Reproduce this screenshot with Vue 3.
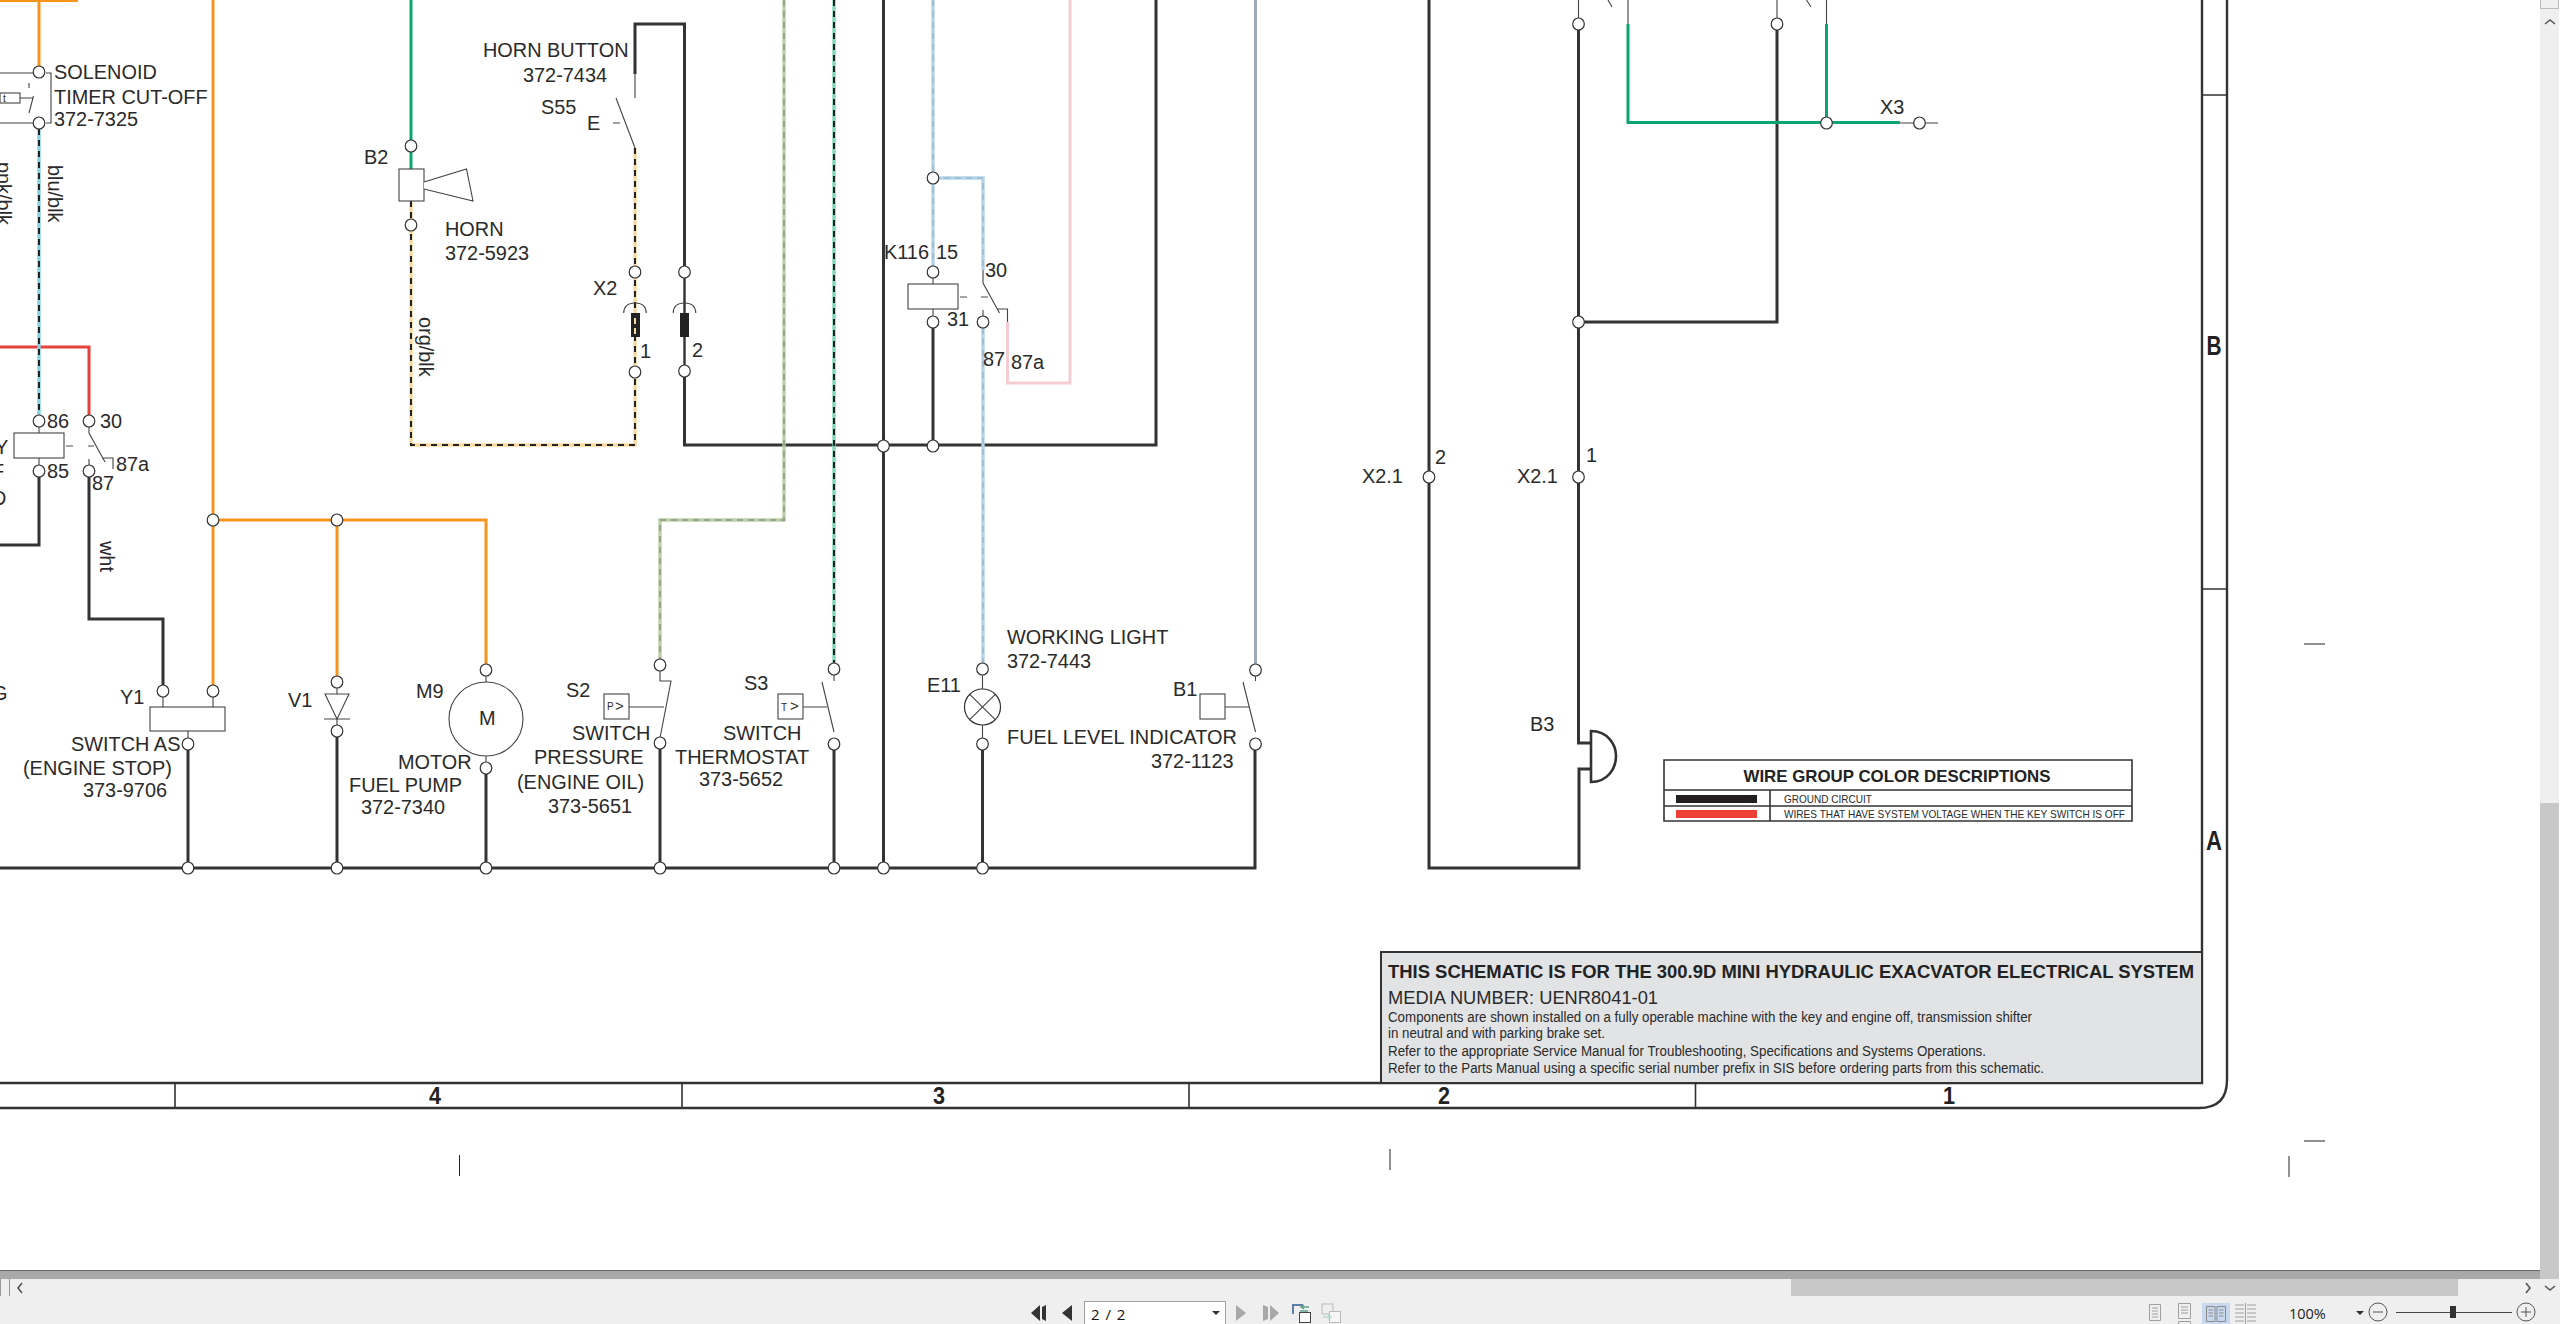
<script setup>
// wire colours from the drawing
const BLACK = "#333";

// solid wires: [path, colour, width]
const wires = [
  ["M0 868H1255V750", BLACK, 3],
  ["M39 477V545H0", BLACK, 3],
  ["M89 477V619H163V685", BLACK, 3],
  ["M188 750V868", BLACK, 3],
  ["M337 737V868", BLACK, 3],
  ["M486 774V868", BLACK, 3],
  ["M660 749V868", BLACK, 3],
  ["M834 750V868", BLACK, 3],
  ["M883.5 0V868", BLACK, 3],
  ["M982.5 750V868", BLACK, 3],
  ["M635 74V24H684.5V266", BLACK, 3],
  ["M684.5 278V313M684.5 337V365", BLACK, 2.4],
  ["M684.5 377V445H1156V0", BLACK, 3],
  ["M933 328V446", BLACK, 3],
  ["M1429 0V868H1579V769H1591", BLACK, 3],
  ["M1591 743H1578.5V30", BLACK, 3],
  ["M1777 30V322H1578", BLACK, 3],
  ["M0 1H78", "#f7941d", 2],
  ["M39 0V66", "#f7941d", 3],
  ["M213 0V685", "#f7941d", 3],
  ["M213 520H486V664", "#f7941d", 3],
  ["M337 520V676", "#f7941d", 3],
  ["M411 0V169", "#0da56f", 3],
  ["M1628 24V122.5H1900", "#0da56f", 3],
  ["M1826.5 24V117", "#0da56f", 3],
  ["M0 347H89V415", "#e8403c", 3],
  ["M1007.5 322V383H1070V0", "#f6ccd3", 3],
  ["M1255.5 0V664", "#9eabba", 3],
];

// striped wires: [path, base colour, stripe colour]
const striped = [
  ["M39 129V415", "#86d0e0", "#222"],
  ["M411 201V445H635V148", "#f8d9a0", "#222"],
  ["M784 0V520H660V659", "#bccfa6", "#98a58c"],
  ["M834 0V663", "#84d3bd", "#222"],
  ["M933 0V266", "#b5d3e8", "#a3bfd4"],
  ["M933 178H983V270", "#b5d3e8", "#a3bfd4"],
  ["M983 328V663", "#b5d3e8", "#a3bfd4"],
];

// thin component strokes
const thin = [
  "M0 73H33M46 73H51V123H46M0 123H33",
  "M20 98H33M29 113L33.5 96M29 83V88",
  "M39 427V433M39 458V465",
  "M89 415V433L105 462M102 458H113V469M89 459V465",
  "M163 697V707M213 697V707M188 731V738",
  "M337 688V694M337 719V725",
  "M486 676V682M486 756V762",
  "M660 671V681H671L660 738M629 707H664",
  "M803 707H827M834 675V681M822 682L834 732",
  "M982.5 675V689M982.5 725V738",
  "M1225 707H1249M1255.5 676V681M1243 682L1255.5 732",
  "M635 74V98M616 98L635 148M613 123H620",
  "M933 278V284M933 309V316",
  "M983 270V283L999.5 313M997 309H1007.5V322M983 310V316",
  "M1578.5 0V18M1777 0V18M1628 0V24M1826.5 0V24",
  "M1608 0L1612 7M1806.5 0L1811 7",
  "M1900 123H1914M1925 123H1938",
];

// grey dashes between relay coil and contact
const dashes = ["M66 446H73M88 446H94", "M960 297H967M981 297H988"];

const boxes = [
  [0, 93, 20, 10],
  [14, 433, 50, 25],
  [150, 707, 75, 24],
  [399, 169, 25, 32],
  [604, 694, 25, 25],
  [778, 694, 25, 25],
  [1200, 694, 25, 25],
  [908, 284, 50, 25],
];

const nodes = [
  [39, 72], [39, 123], [39, 421], [89, 421], [39, 471], [89, 471],
  [163, 691], [213, 691], [188, 744], [213, 520], [337, 520], [337, 682],
  [337, 731], [486, 670], [486, 768], [188, 868], [337, 868], [486, 868],
  [660, 868], [834, 868], [883.5, 868], [982.5, 868], [660, 665], [660, 743],
  [834, 669], [834, 744], [982.5, 669], [982.5, 744], [1255.5, 670], [1255.5, 744],
  [411, 146], [411, 225], [635, 272], [635, 372], [684.5, 272], [684.5, 371],
  [933, 178], [933, 272], [933, 322], [983, 322], [883.5, 446], [933, 446],
  [1578.5, 24], [1777, 24], [1578.5, 322], [1578.5, 477], [1429, 477],
  [1826.5, 123], [1919.5, 123],
];

const SIZE = 19.9;
const label = (x, y, text, size = SIZE) => ({ x, y: y + size * 0.36, text, size });

const labels = [
  label(54, 72, "SOLENOID"), label(54, 97, "TIMER CUT-OFF"), label(54, 119, "372-7325"),
  label(483, 50, "HORN BUTTON"), label(523, 75, "372-7434"), label(541, 107, "S55"), label(587, 123, "E"),
  label(364, 157, "B2"), label(445, 229, "HORN"), label(445, 253, "372-5923"), label(593, 288, "X2"),
  label(640, 351, "1"), label(692, 350, "2"),
  label(-12, 421, "9"), label(47, 421, "86"), label(100, 421, "30"), label(116, 464, "87a"),
  label(47, 471, "85"), label(92, 483, "87"), label(-5, 447, "Y"), label(-8, 471, "F"), label(-8, 498, "D"), label(-8, 693, "G"),
  label(120, 697, "Y1"), label(71, 744, "SWITCH AS"), label(23, 768, "(ENGINE STOP)"), label(83, 790, "373-9706"),
  label(288, 700, "V1"), label(416, 691, "M9"), label(398, 762, "MOTOR"), label(349, 785, "FUEL PUMP"), label(361, 807, "372-7340"),
  label(566, 690, "S2"), label(572, 733, "SWITCH"), label(534, 757, "PRESSURE"), label(517, 782, "(ENGINE OIL)"), label(548, 806, "373-5651"),
  label(744, 683, "S3"), label(723, 733, "SWITCH"), label(675, 757, "THERMOSTAT"), label(699, 779, "373-5652"),
  label(927, 685, "E11"), label(1007, 637, "WORKING LIGHT"), label(1007, 661, "372-7443"),
  label(1007, 737, "FUEL LEVEL INDICATOR"), label(1151, 761, "372-1123"), label(1173, 689, "B1"),
  label(884, 252, "K116"), label(936, 252, "15"), label(947, 319, "31"), label(985, 270, "30"), label(983, 359, "87"), label(1011, 362, "87a"),
  label(1880, 107, "X3"), label(1362, 476, "X2.1"), label(1435, 457, "2"), label(1517, 476, "X2.1"), label(1586, 455, "1"), label(1530, 724, "B3"),
  label(479, 718, "M"),
  label(3, 98, "t", 10), label(607, 706, "P", 10), label(615, 706, ">", 15), label(781, 707, "T", 10), label(790, 706, ">", 15),
];

// rotated wire colour names, reading downwards
const wireNames = [
  { x: -3, y: 162, text: "pnk/blk" },
  { x: 47.5, y: 165, text: "blu/blk" },
  { x: 100, y: 541, text: "wht" },
  { x: 419, y: 317, text: "org/blk" },
];

const zones = [
  { x: 435, text: "4" },
  { x: 939, text: "3" },
  { x: 1444, text: "2" },
  { x: 1949, text: "1" },
];

const notes = [
  { y: 1022, w: 644, text: "Components are shown installed on a fully operable machine with the key and engine off, transmission shifter" },
  { y: 1038, w: 217, text: "in neutral and with parking brake set." },
  { y: 1056, w: 598, text: "Refer to the appropriate Service Manual for Troubleshooting, Specifications and Systems Operations." },
  { y: 1073, w: 656, text: "Refer to the Parts Manual using a specific serial number prefix in SIS before ordering parts from this schematic." },
];
</script>

<template>
  <div class="viewer">
    <div class="work">
      <div class="page-col">
        <svg class="sheet" width="2540" height="1270" viewBox="0 0 2540 1270">
          <!-- sheet frame -->
          <path class="frame" d="M0 1083H2202V0M0 1108H2199Q2227 1108 2227 1080V0" />
          <path class="frame-thin" d="M175 1083V1108M682 1083V1108M1189 1083V1108M1695.5 1083V1108M2202 95H2227M2202 589H2227" />
          <path class="crop" d="M459.5 1155V1176M1390 1149V1170M2289 1156V1177M2304 644H2325M2304 1141H2325" />
          <text
            v-for="z in zones"
            :key="z.x"
            class="zone"
            :x="z.x"
            y="1104"
            text-anchor="middle"
            textLength="12"
            lengthAdjust="spacingAndGlyphs"
          >{{ z.text }}</text>
          <text class="zone-side" x="2214" y="355" text-anchor="middle" textLength="15" lengthAdjust="spacingAndGlyphs">B</text>
          <text class="zone-side" x="2214" y="850" text-anchor="middle" textLength="16" lengthAdjust="spacingAndGlyphs">A</text>

          <!-- wires -->
          <path v-for="(w, i) in wires" :key="'w' + i" class="wire" :d="w[0]" :stroke="w[1]" :stroke-width="w[2]" />
          <g v-for="(s, i) in striped" :key="'s' + i">
            <path class="wire" :d="s[0]" :stroke="s[1]" stroke-width="3.4" />
            <path class="wire stripe" :d="s[0]" :stroke="s[2]" stroke-width="2" />
          </g>
          <path v-for="(d, i) in thin" :key="'t' + i" class="thin" :d="d" />
          <path v-for="(d, i) in dashes" :key="'d' + i" class="relay-dash" :d="d" />

          <!-- components -->
          <rect v-for="(b, i) in boxes" :key="'b' + i" class="part" :x="b[0]" :y="b[1]" :width="b[2]" :height="b[3]" />
          <path class="part" d="M424 182L466.5 169L473 201L424 189" />
          <path class="part" d="M325 694H349L337 719ZM324 719H350" />
          <circle class="part" cx="486" cy="719" r="37" />
          <circle class="lamp" cx="982.5" cy="707" r="18" />
          <path class="thin" d="M969.7 694.3L995.3 719.7M995.3 694.3L969.7 719.7" />
          <path class="thin" d="M623.7 313Q624 303 635 303Q646 303 646.3 313M673.2 313Q673.5 303 684.5 303Q695.5 303 695.8 313" />
          <rect x="631" y="313" width="9" height="24" fill="#222" />
          <path d="M635 318V334" stroke="#f8d9a0" stroke-width="2" stroke-dasharray="6 4" />
          <rect x="680" y="313" width="9" height="24" fill="#222" />
          <path class="horn-d" d="M1591 731C1608 731 1616 745 1616 756C1616 768 1608 782 1591 782Z" />

          <ellipse v-for="(n, i) in nodes" :key="'n' + i" class="node" :cx="n[0]" :cy="n[1]" rx="5.8" ry="6" />

          <text v-for="(l, i) in labels" :key="'l' + i" class="label" :x="l.x" :y="l.y" :font-size="l.size">{{ l.text }}</text>
          <text
            v-for="n in wireNames"
            :key="n.text"
            class="label"
            font-size="19.9"
            :x="n.x"
            :y="n.y"
            :transform="`rotate(90 ${n.x} ${n.y})`"
          >{{ n.text }}</text>

          <!-- colour legend -->
          <path class="frame-thin" d="M1664 760H2132V821H1664ZM1664 790H2132M1664 806H2132M1770 790V821" />
          <rect x="1676" y="795" width="81" height="8" fill="#231f20" />
          <rect x="1676" y="810" width="81" height="8" fill="#ef3e36" />
          <text class="label bold" x="1897" y="782" font-size="17" text-anchor="middle" textLength="307" lengthAdjust="spacingAndGlyphs">WIRE GROUP COLOR DESCRIPTIONS</text>
          <text class="label" x="1784" y="803" font-size="11" textLength="88" lengthAdjust="spacingAndGlyphs">GROUND CIRCUIT</text>
          <text class="label" x="1784" y="818" font-size="11" textLength="341" lengthAdjust="spacingAndGlyphs">WIRES THAT HAVE SYSTEM VOLTAGE WHEN THE KEY SWITCH IS OFF</text>

          <!-- title block -->
          <rect class="title-block" x="1381" y="952" width="821" height="131" />
          <text class="label bold" x="1388" y="978" font-size="18.5" textLength="806" lengthAdjust="spacingAndGlyphs">THIS SCHEMATIC IS FOR THE 300.9D MINI HYDRAULIC EXACVATOR ELECTRICAL SYSTEM</text>
          <text class="label" x="1388" y="1004" font-size="18.6" textLength="270" lengthAdjust="spacingAndGlyphs">MEDIA NUMBER: UENR8041-01</text>
          <text
            v-for="n in notes"
            :key="n.y"
            class="label"
            x="1388"
            :y="n.y"
            font-size="14"
            :textLength="n.w"
            lengthAdjust="spacingAndGlyphs"
          >{{ n.text }}</text>
        </svg>
        <div class="band"></div>
      </div>

      <div class="vbar">
        <div class="vbar-cap"></div>
        <svg class="chev-up" width="14" height="8" viewBox="0 0 14 8"><path d="M2 6L7 2L12 6" /></svg>
        <div class="vbar-thumb"></div>
      </div>
    </div>

    <div class="hbar">
      <div class="hbar-box"></div>
      <svg class="chev-left" width="8" height="14" viewBox="0 0 8 14"><path d="M6 2L2 7L6 12" /></svg>
      <div class="hbar-thumb"></div>
      <svg class="chev-right" width="8" height="14" viewBox="0 0 8 14"><path d="M2 2L6 7L2 12" /></svg>
      <svg class="chev-down" width="14" height="8" viewBox="0 0 14 8"><path d="M2 2L7 6L12 2" /></svg>
    </div>

    <div class="status">
      <svg class="tool first" width="16" height="16" viewBox="0 0 16 16">
        <path d="M0 8L9 0V16ZM11 2L15 0V16L11 14Z" fill="#333" />
      </svg>
      <svg class="tool prev" width="10" height="16" viewBox="0 0 10 16">
        <path d="M0 8L10 0V16Z" fill="#333" />
      </svg>
      <div class="page-box">
        <span>2 / 2</span>
        <i class="caret"></i>
      </div>
      <svg class="tool next" width="10" height="16" viewBox="0 0 10 16">
        <path d="M10 8L0 0V16Z" fill="#a8a8a8" />
      </svg>
      <svg class="tool last" width="16" height="16" viewBox="0 0 16 16">
        <path d="M16 8L7 0V16ZM5 2L0 0V16L5 14Z" fill="#a8a8a8" />
      </svg>
      <svg class="tool win-a" width="20" height="20" viewBox="0 0 20 20">
        <path d="M1 1H12V3H3V11H1Z" fill="#5b7fa8" />
        <rect x="8.5" y="9.5" width="11" height="10" fill="#fff" stroke="#444" />
        <path d="M10 4H18M13 2L10 4L13 6M9 8H17" fill="none" stroke="#5fa38f" stroke-width="1.5" />
      </svg>
      <svg class="tool win-b" width="20" height="20" viewBox="0 0 20 20">
        <rect x="1" y="1" width="11" height="10" fill="none" stroke="#bbb" />
        <rect x="8.5" y="8.5" width="11" height="11" fill="#f6f6f6" stroke="#bbb" />
        <path d="M2 14H9M7 12L10 14L7 16" fill="none" stroke="#b8d8cc" stroke-width="1.5" />
      </svg>

      <svg class="tool view-a" width="12" height="20" viewBox="0 0 12 20">
        <path d="M.5 2.5H11.5V18.5H.5ZM3 6H9M3 9H9M3 12H9M3 15H9" fill="none" stroke="#a0a0a0" />
      </svg>
      <svg class="tool view-b" width="13" height="22" viewBox="0 0 13 22">
        <path d="M.5 .5H12.5V15.5H.5ZM3 4H10M3 7H10M3 10H10M.5 18.5H12.5V22M.5 18.5V22" fill="none" stroke="#a0a0a0" />
      </svg>
      <div class="view-on">
        <svg width="20" height="16" viewBox="0 0 20 16">
          <path d="M.5 .5H9V15.5H.5ZM11 .5H19.5V15.5H11ZM2.5 4H7M2.5 7H7M2.5 10H7M13 4H17.5M13 7H17.5M13 10H17.5" fill="none" stroke="#8a8a8a" />
        </svg>
      </div>
      <svg class="tool view-d" width="21" height="22" viewBox="0 0 21 22">
        <path d="M0 2H9M0 6H9M0 10H9M12 2H21M12 6H21M12 10H21M0 14H9M0 18H9M12 14H21M12 18H21M10.5 0V22" fill="none" stroke="#a0a0a0" />
      </svg>

      <span class="zoom-text">100%</span>
      <i class="caret zoom-caret"></i>
      <svg class="tool zoom-minus" width="20" height="20" viewBox="0 0 20 20">
        <circle cx="10" cy="10" r="9" fill="none" stroke="#555" />
        <path d="M5 10H15" stroke="#555" />
      </svg>
      <div class="slider"><div class="slider-thumb"></div></div>
      <svg class="tool zoom-plus" width="20" height="20" viewBox="0 0 20 20">
        <circle cx="10" cy="10" r="9" fill="none" stroke="#555" />
        <path d="M5 10H15M10 5V15" stroke="#555" />
      </svg>
    </div>
  </div>
</template>

<style>
html,
body {
  margin: 0;
  background: #fff;
}
</style>

<style scoped>
.viewer {
  width: 2560px;
  height: 1324px;
  display: flex;
  flex-direction: column;
  overflow: hidden;
  background: #fff;
  font-family: "Liberation Sans", Arial, sans-serif;
}

.work {
  height: 1279px;
  display: flex;
}

.page-col {
  width: 2540px;
  display: flex;
  flex-direction: column;
}

.sheet {
  display: block;
  background: #fff;
  border-top: 1px solid #e6e6e6;
  margin-top: -1px;
}

.band {
  height: 8px;
  border-top: 1px solid #666;
  background: #a9a9a9;
}

.vbar {
  width: 19px;
  height: 1279px;
  background: #efefef;
  display: flex;
  flex-direction: column;
  align-items: center;
}

.vbar-cap {
  width: 19px;
  height: 9px;
  box-sizing: border-box;
  border: 1px solid #bbb;
  border-top: 0;
}

.chev-up {
  margin-top: 9px;
}

.vbar-thumb {
  margin-top: auto;
  width: 19px;
  height: 476px;
  background: #c8c8c8;
}

.chev-up path,
.chev-left path,
.chev-right path,
.chev-down path {
  fill: none;
  stroke: #555;
  stroke-width: 1.6;
}

.hbar {
  position: relative;
  height: 17px;
  background: #efefef;
}

.hbar-box {
  position: absolute;
  left: 0;
  top: 0;
  width: 10px;
  height: 17px;
  box-sizing: border-box;
  border: 1px solid #999;
  border-top: 0;
  border-bottom: 0;
}

.chev-left {
  position: absolute;
  left: 16px;
  top: 2px;
}

.hbar-thumb {
  position: absolute;
  left: 1791px;
  top: 0;
  width: 667px;
  height: 17px;
  background: #c8c8c8;
}

.chev-right {
  position: absolute;
  left: 2524px;
  top: 2px;
}

.chev-down {
  position: absolute;
  left: 2543px;
  top: 5px;
}

.status {
  height: 28px;
  background: #efefef;
  display: flex;
  align-items: flex-start;
  overflow: hidden;
  padding-left: 1031px;
}

.tool {
  flex: none;
  margin-top: 9px;
}

.prev {
  margin-left: 15px;
}

.page-box {
  flex: none;
  margin: 5px 0 0 12px;
  width: 142px;
  height: 30px;
  box-sizing: border-box;
  border: 1px solid #a0a0a0;
  background: #fff;
  padding: 2px 0 0 6px;
  position: relative;
  font: 15px "Open Sans", sans-serif;
  letter-spacing: 1px;
  color: #111;
}

.caret {
  display: block;
  width: 0;
  height: 0;
  border-left: 4px solid transparent;
  border-right: 4px solid transparent;
  border-top: 4px solid #333;
}

.page-box .caret {
  position: absolute;
  right: 5px;
  top: 9px;
}

.next {
  margin-left: 10px;
}

.last {
  margin-left: 17px;
}

.win-a {
  margin: 7px 0 0 12px;
}

.win-b {
  margin: 7px 0 0 10px;
}

.view-a {
  margin: 6px 0 0 808px;
}

.view-b {
  margin: 7px 0 0 17px;
}

.view-on {
  flex: none;
  margin: 7px 0 0 11px;
  width: 28px;
  height: 25px;
  background: #c8d8ee;
  display: flex;
  justify-content: center;
  padding-top: 3px;
}

.view-d {
  margin: 7px 0 0 5px;
}

.zoom-text {
  flex: none;
  margin: 8px 0 0 33px;
  font: 14.5px "Open Sans", sans-serif;
  color: #222;
}

.zoom-caret {
  flex: none;
  margin: 15px 0 0 30px;
}

.zoom-minus {
  margin: 6px 0 0 4px;
}

.slider {
  flex: none;
  position: relative;
  margin: 16px 0 0 8px;
  width: 116px;
  height: 1px;
  background: #444;
}

.slider-thumb {
  position: absolute;
  left: 54px;
  top: -6px;
  width: 6px;
  height: 12px;
  background: #333;
}

.zoom-plus {
  margin: 6px 0 0 4px;
}

.frame {
  fill: none;
  stroke: #333;
  stroke-width: 2.4;
}

.frame-thin {
  fill: none;
  stroke: #333;
  stroke-width: 1.6;
}

.crop {
  fill: none;
  stroke: #222;
  stroke-width: 1;
}

.zone {
  font: bold 24px "Liberation Sans", Arial, sans-serif;
  fill: #222;
}

.zone-side {
  font: bold 27px "Liberation Sans", Arial, sans-serif;
  fill: #222;
}

.wire {
  fill: none;
}

.stripe {
  stroke-dasharray: 6 5;
}

.thin {
  fill: none;
  stroke: #444;
  stroke-width: 1.1;
}

.relay-dash {
  fill: none;
  stroke: #888;
  stroke-width: 1.4;
}

.part {
  fill: #fff;
  stroke: #444;
  stroke-width: 1.1;
}

.lamp {
  fill: #fff;
  stroke: #333;
  stroke-width: 1.2;
}

.horn-d {
  fill: #fff;
  stroke: #333;
  stroke-width: 2.6;
}

.node {
  fill: #fff;
  stroke: #333;
  stroke-width: 1.2;
}

.label {
  font-family: "Liberation Sans", Arial, sans-serif;
  fill: #2a2a2a;
}

.bold {
  font-weight: 700;
  fill: #222;
}

.title-block {
  fill: #e1e3e5;
  stroke: #333;
  stroke-width: 2;
}
</style>
